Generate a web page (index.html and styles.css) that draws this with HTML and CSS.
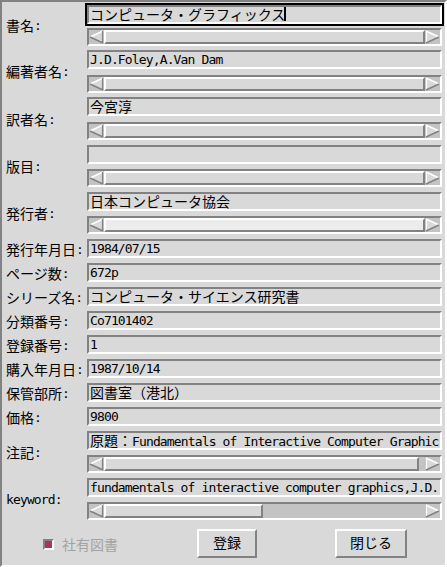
FILE: index.html
```html
<!DOCTYPE html>
<html><head><meta charset="utf-8"><link rel="stylesheet" href="styles.css"></head>
<body>
<div class="win">
  <div class="grp h46">
    <div class="lbl"><span class="j">書名</span>:</div>
    <div class="fld">
      <div class="ent focus mt3"><span class="j">コンピュータ・グラフィックス</span><span class="cur"></span></div>
      <div class="sb mt4"><svg class="ar" width="15" height="14" viewBox="0 0 15 14"><polygon points="1,7 14,1 14,13" fill="#d9d9d9"/><line x1="1" y1="7" x2="14" y2="1" stroke="#fff" stroke-width="1.5"/><line x1="1" y1="7" x2="14" y2="13" stroke="#828282" stroke-width="1.5"/><line x1="13.5" y1="1" x2="13.5" y2="13" stroke="#828282" stroke-width="1.2"/></svg><div class="trk"><div class="sl" style="width:100%"></div></div><svg class="ar" width="15" height="14" viewBox="0 0 15 14"><polygon points="14,7 1,1 1,13" fill="#d9d9d9"/><line x1="1.5" y1="1" x2="1.5" y2="13" stroke="#fff" stroke-width="1.2"/><line x1="14" y1="7" x2="1" y2="1" stroke="#fff" stroke-width="1.5"/><line x1="14" y1="7" x2="1" y2="13" stroke="#828282" stroke-width="1.5"/></svg></div>
    </div>
  </div>
  <div class="grp h47">
    <div class="lbl"><span class="j">編著者名</span>:</div>
    <div class="fld">
      <div class="ent mt2">J.D.Foley,A.Van Dam</div>
      <div class="sb mt6"><svg class="ar" width="15" height="14" viewBox="0 0 15 14"><polygon points="1,7 14,1 14,13" fill="#d9d9d9"/><line x1="1" y1="7" x2="14" y2="1" stroke="#fff" stroke-width="1.5"/><line x1="1" y1="7" x2="14" y2="13" stroke="#828282" stroke-width="1.5"/><line x1="13.5" y1="1" x2="13.5" y2="13" stroke="#828282" stroke-width="1.2"/></svg><div class="trk"><div class="sl" style="width:100%"></div></div><svg class="ar" width="15" height="14" viewBox="0 0 15 14"><polygon points="14,7 1,1 1,13" fill="#d9d9d9"/><line x1="1.5" y1="1" x2="1.5" y2="13" stroke="#fff" stroke-width="1.2"/><line x1="14" y1="7" x2="1" y2="1" stroke="#fff" stroke-width="1.5"/><line x1="14" y1="7" x2="1" y2="13" stroke="#828282" stroke-width="1.5"/></svg></div>
    </div>
  </div>
  <div class="grp h48">
    <div class="lbl"><span class="j">訳者名</span>:</div>
    <div class="fld">
      <div class="ent mt2"><span class="j">今宮淳</span></div>
      <div class="sb mt6"><svg class="ar" width="15" height="14" viewBox="0 0 15 14"><polygon points="1,7 14,1 14,13" fill="#d9d9d9"/><line x1="1" y1="7" x2="14" y2="1" stroke="#fff" stroke-width="1.5"/><line x1="1" y1="7" x2="14" y2="13" stroke="#828282" stroke-width="1.5"/><line x1="13.5" y1="1" x2="13.5" y2="13" stroke="#828282" stroke-width="1.2"/></svg><div class="trk"><div class="sl" style="width:100%"></div></div><svg class="ar" width="15" height="14" viewBox="0 0 15 14"><polygon points="14,7 1,1 1,13" fill="#d9d9d9"/><line x1="1.5" y1="1" x2="1.5" y2="13" stroke="#fff" stroke-width="1.2"/><line x1="14" y1="7" x2="1" y2="1" stroke="#fff" stroke-width="1.5"/><line x1="14" y1="7" x2="1" y2="13" stroke="#828282" stroke-width="1.5"/></svg></div>
    </div>
  </div>
  <div class="grp h47">
    <div class="lbl"><span class="j">版目</span>:</div>
    <div class="fld">
      <div class="ent mt2"></div>
      <div class="sb mt5"><svg class="ar" width="15" height="14" viewBox="0 0 15 14"><polygon points="1,7 14,1 14,13" fill="#d9d9d9"/><line x1="1" y1="7" x2="14" y2="1" stroke="#fff" stroke-width="1.5"/><line x1="1" y1="7" x2="14" y2="13" stroke="#828282" stroke-width="1.5"/><line x1="13.5" y1="1" x2="13.5" y2="13" stroke="#828282" stroke-width="1.2"/></svg><div class="trk"><div class="sl" style="width:100%"></div></div><svg class="ar" width="15" height="14" viewBox="0 0 15 14"><polygon points="14,7 1,1 1,13" fill="#d9d9d9"/><line x1="1.5" y1="1" x2="1.5" y2="13" stroke="#fff" stroke-width="1.2"/><line x1="14" y1="7" x2="1" y2="1" stroke="#fff" stroke-width="1.5"/><line x1="14" y1="7" x2="1" y2="13" stroke="#828282" stroke-width="1.5"/></svg></div>
    </div>
  </div>
  <div class="grp h47">
    <div class="lbl"><span class="j">発行者</span>:</div>
    <div class="fld">
      <div class="ent mt2"><span class="j">日本コンピュータ協会</span></div>
      <div class="sb mt5"><svg class="ar" width="15" height="14" viewBox="0 0 15 14"><polygon points="1,7 14,1 14,13" fill="#d9d9d9"/><line x1="1" y1="7" x2="14" y2="1" stroke="#fff" stroke-width="1.5"/><line x1="1" y1="7" x2="14" y2="13" stroke="#828282" stroke-width="1.5"/><line x1="13.5" y1="1" x2="13.5" y2="13" stroke="#828282" stroke-width="1.2"/></svg><div class="trk"><div class="sl hover" style="width:100%"></div></div><svg class="ar" width="15" height="14" viewBox="0 0 15 14"><polygon points="14,7 1,1 1,13" fill="#d9d9d9"/><line x1="1.5" y1="1" x2="1.5" y2="13" stroke="#fff" stroke-width="1.2"/><line x1="14" y1="7" x2="1" y2="1" stroke="#fff" stroke-width="1.5"/><line x1="14" y1="7" x2="1" y2="13" stroke="#828282" stroke-width="1.5"/></svg></div>
    </div>
  </div>
  <div class="grp h24">
    <div class="lbl"><span class="j">発行年月日</span>:</div>
    <div class="fld"><div class="ent mt2">1984/07/15</div></div>
  </div>
  <div class="grp h24">
    <div class="lbl"><span class="j">ページ数</span>:</div>
    <div class="fld"><div class="ent mt2">672p</div></div>
  </div>
  <div class="grp h24">
    <div class="lbl"><span class="j">シリーズ名</span>:</div>
    <div class="fld"><div class="ent mt2"><span class="j">コンピュータ・サイエンス研究書</span></div></div>
  </div>
  <div class="grp h24">
    <div class="lbl"><span class="j">分類番号</span>:</div>
    <div class="fld"><div class="ent mt2">Co7101402</div></div>
  </div>
  <div class="grp h24">
    <div class="lbl"><span class="j">登録番号</span>:</div>
    <div class="fld"><div class="ent mt2">1</div></div>
  </div>
  <div class="grp h24">
    <div class="lbl"><span class="j">購入年月日</span>:</div>
    <div class="fld"><div class="ent mt2">1987/10/14</div></div>
  </div>
  <div class="grp h24">
    <div class="lbl"><span class="j">保管部所</span>:</div>
    <div class="fld"><div class="ent mt2"><span class="j">図書室（港北）</span></div></div>
  </div>
  <div class="grp h24">
    <div class="lbl"><span class="j">価格</span>:</div>
    <div class="fld"><div class="ent mt2">9800</div></div>
  </div>
  <div class="grp h47">
    <div class="lbl"><span class="j">注記</span>:</div>
    <div class="fld">
      <div class="ent mt2"><span class="j">原題：</span>Fundamentals of Interactive Computer Graphic</div>
      <div class="sb mt5"><svg class="ar" width="15" height="14" viewBox="0 0 15 14"><polygon points="1,7 14,1 14,13" fill="#d9d9d9"/><line x1="1" y1="7" x2="14" y2="1" stroke="#fff" stroke-width="1.5"/><line x1="1" y1="7" x2="14" y2="13" stroke="#828282" stroke-width="1.5"/><line x1="13.5" y1="1" x2="13.5" y2="13" stroke="#828282" stroke-width="1.2"/></svg><div class="trk"><div class="sl" style="width:315px"></div></div><svg class="ar" width="15" height="14" viewBox="0 0 15 14"><polygon points="14,7 1,1 1,13" fill="#d9d9d9"/><line x1="1.5" y1="1" x2="1.5" y2="13" stroke="#fff" stroke-width="1.2"/><line x1="14" y1="7" x2="1" y2="1" stroke="#fff" stroke-width="1.5"/><line x1="14" y1="7" x2="1" y2="13" stroke="#828282" stroke-width="1.5"/></svg></div>
    </div>
  </div>
  <div class="grp h47">
    <div class="lbl">keyword:</div>
    <div class="fld">
      <div class="ent mt2">fundamentals of interactive computer graphics,J.D.</div>
      <div class="sb mt5"><svg class="ar" width="15" height="14" viewBox="0 0 15 14"><polygon points="1,7 14,1 14,13" fill="#d9d9d9"/><line x1="1" y1="7" x2="14" y2="1" stroke="#fff" stroke-width="1.5"/><line x1="1" y1="7" x2="14" y2="13" stroke="#828282" stroke-width="1.5"/><line x1="13.5" y1="1" x2="13.5" y2="13" stroke="#828282" stroke-width="1.2"/></svg><div class="trk"><div class="sl" style="width:159px"></div></div><svg class="ar" width="15" height="14" viewBox="0 0 15 14"><polygon points="14,7 1,1 1,13" fill="#d9d9d9"/><line x1="1.5" y1="1" x2="1.5" y2="13" stroke="#fff" stroke-width="1.2"/><line x1="14" y1="7" x2="1" y2="1" stroke="#fff" stroke-width="1.5"/><line x1="14" y1="7" x2="1" y2="13" stroke="#828282" stroke-width="1.5"/></svg></div>
    </div>
  </div>
  <div class="bottom">
    <span class="chk"></span>
    <span class="chklbl j">社有図書</span>
    <div class="btn b1"><span class="j">登録</span></div>
    <div class="btn b2"><span class="j">閉じる</span></div>
  </div>
</div>
</body></html>
```

FILE: styles.css
```css
* { box-sizing: border-box; }
html, body { margin: 0; padding: 0; }
body {
  width: 447px;
  height: 567px;
  overflow: hidden;
  background: #d9d9d9;
  color: #000;
  font-family: "DejaVu Sans Mono", monospace;
  font-size: 13px;
  letter-spacing: -0.86px;
}
.j {
  font-family: "Noto Sans CJK JP", sans-serif;
  font-size: 14px;
  letter-spacing: 0;
}
.win {
  width: 447px;
  height: 567px;
  border: 2px solid;
  border-color: #828282 #fff #fff #828282;
  display: flex;
  flex-direction: column;
}
.grp { display: flex; flex: none; }
.h24 { height: 24px; }
.h46 { height: 46px; }
.h47 { height: 47px; }
.h48 { height: 48px; }
.lbl {
  width: 85px;
  display: flex;
  align-items: center;
  padding-left: 4px;
  line-height: 15px;
  white-space: nowrap;
}
.fld { width: 355px; display: flex; flex-direction: column; }
.ent {
  height: 19px;
  border: 2px solid;
  border-color: #828282 #fff #fff #828282;
  padding: 0 0 0 1px;
  line-height: 15px;
  white-space: nowrap;
  overflow: hidden;
  flex: none;
}
.focus { outline: 2px solid #000; }
.cur {
  display: inline-block;
  width: 2px;
  height: 14px;
  background: #000;
  vertical-align: top;
  margin-left: -1px;
}
.mt2 { margin-top: 2px; }
.mt3 { margin-top: 3px; }
.mt4 { margin-top: 4px; }
.mt5 { margin-top: 5px; }
.mt6 { margin-top: 6px; }
.sb {
  height: 18px;
  flex: none;
  border: 2px solid;
  border-color: #828282 #fff #fff #828282;
  background: #c3c3c3;
  display: flex;
}
.ar { display: block; flex: none; }
.trk { flex: 1; display: flex; }
.sl {
  height: 14px;
  border: 2px solid;
  border-color: #fff #828282 #828282 #fff;
  background: #d9d9d9;
}
.sl.hover { background: #ececec; }
.bottom {
  flex: 1;
  display: flex;
  align-items: flex-start;
}
.chk {
  width: 11px;
  height: 11px;
  margin: 16px 0 0 41px;
  border: 2px solid;
  border-color: #828282 #fff #fff #828282;
  background: #b03060;
}
.chklbl {
  margin: 14px 0 0 8px;
  line-height: 15px;
  color: #a3a3a3;
  width: 56px;
}
.btn {
  height: 29px;
  margin-top: 6px;
  border: 2px solid;
  border-color: #fff #828282 #828282 #fff;
  display: flex;
  align-items: center;
  justify-content: center;
  line-height: 15px;
  padding-bottom: 2px;
}
.b1 { width: 60px; margin-left: 79px; }
.b2 { width: 72px; margin-left: 78px; }
```
